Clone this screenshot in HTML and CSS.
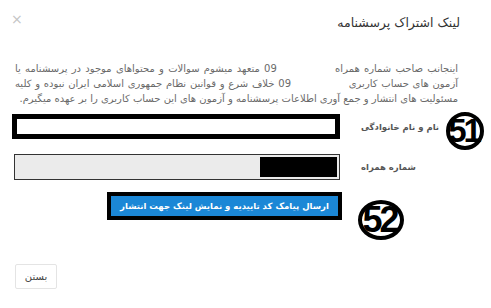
FILE: index.html
```html
<!DOCTYPE html>
<html lang="fa" dir="rtl">
<head>
<meta charset="utf-8">
<link rel="stylesheet" href="styles.css">
</head>
<body>
<div class="modal">
  <div class="modal-header">
    <h4 class="modal-title">لینک اشتراک پرسشنامه</h4>
    <span class="close">×</span>
  </div>
  <div class="modal-body">
    <p class="terms">اینجانب صاحب شماره همراه <span class="mask"></span>09 متعهد میشوم سوالات و محتواهای موجود در پرسشنامه یا آزمون های حساب کاربری <span class="mask"></span>09 خلاف شرع و قوانین نظام جمهوری اسلامی ایران نبوده و کلیه مسئولیت های انتشار و جمع آوری اطلاعات پرسشنامه و آزمون های این حساب کاربری را بر عهده میگیرم.</p>
    <div class="form-row row-name">
      <label class="control-label">نام و نام خانوادگی</label>
      <div class="control"><div class="input input-name"></div></div>
    </div>
    <div class="form-row row-phone">
      <label class="control-label">شماره همراه</label>
      <div class="control"><div class="input input-phone"><span class="redact"></span></div></div>
    </div>
    <div class="form-row row-btn">
      <span class="control-label"></span>
      <div class="control control-btn">
        <div class="btn-frame"><button class="btn-primary">ارسال پیامک کد تاییدیه و نمایش لینک جهت انتشار</button></div>
      </div>
    </div>
  </div>
  <div class="modal-footer">
    <button class="btn-default">بستن</button>
  </div>
  <span class="badge badge-51">51</span>
  <span class="badge badge-52">52</span>
</div>
</body>
</html>
```
FILE: styles.css
```css
* { box-sizing: border-box; }
html, body { margin: 0; padding: 0; background: #fff; }
body { font-family: "DejaVu Sans", sans-serif; color: #555; }
.modal { position: relative; width: 491px; height: 308px; overflow: hidden; }
.modal-header { display: flex; justify-content: space-between; align-items: flex-start; padding: 13px 31px 0 11px; height: 33px; }
.modal-title { margin: 0; font-size: 12.5px; font-weight: normal; line-height: 20px; color: #333; }
.close { font-size: 14px; line-height: 16px; color: #c4c4c4; margin-top: -2px; }
.modal-body { padding: 0 31px 0 12px; }
.terms { margin: 28px 0 0 0; padding: 0 2px 0 3px; font-size: 10px; line-height: 15px; text-align: justify; color: #6a6a6a; }
.mask { display: inline-block; width: 54px; }
.form-row { display: flex; align-items: center; gap: 21px; }
.control-label { width: 99px; flex: none; font-size: 8.5px; font-weight: bold; color: #555; text-align: left; white-space: nowrap; }
.control { flex: 1; }
.row-name { margin-top: 8px; height: 25px; }
.row-phone { margin-top: 15px; height: 26px; }
.row-btn { margin-top: 12px; height: 28px; }
.input { height: 100%; }
.input-name { height: 25px; border: 5px solid #000; background: #fff; }
.input-phone { height: 26px; margin-left: 2px; border: 1px solid #333; background: #ebebeb; padding: 2px; display: flex; }
.redact { width: 77px; height: 20px; background: #000; }
.control-btn { display: flex; justify-content: flex-start; }
.btn-frame { background: #000; padding: 4px; margin-right: -2px; }
.btn-primary { display: block; width: 227px; height: 20px; border: 0; padding: 0; background: #1b87d6; color: #fff; font-family: "DejaVu Sans", sans-serif; font-size: 8.5px; font-weight: bold; line-height: 20px; white-space: nowrap; }
.modal-footer { display: flex; justify-content: flex-end; padding: 44px 0 0 15px; }
.btn-default { width: 42px; height: 25px; border: 1px solid #e4e4e4; border-radius: 2px; background: #fff; color: #444; font-family: "DejaVu Sans", sans-serif; font-size: 10px; padding: 0; }
.badge { position: absolute; display: flex; align-items: center; justify-content: center; border: 4px solid #000; border-radius: 50%; background: #fff; color: #000; font-family: "Liberation Sans", sans-serif; font-weight: bold; letter-spacing: -3px; direction: ltr; padding-right: 3px; }
.badge-51 { left: 446px; top: 112px; width: 38px; height: 38px; font-size: 33px; }
.badge-52 { left: 358px; top: 200px; width: 46px; height: 40px; font-size: 36px; }
```
